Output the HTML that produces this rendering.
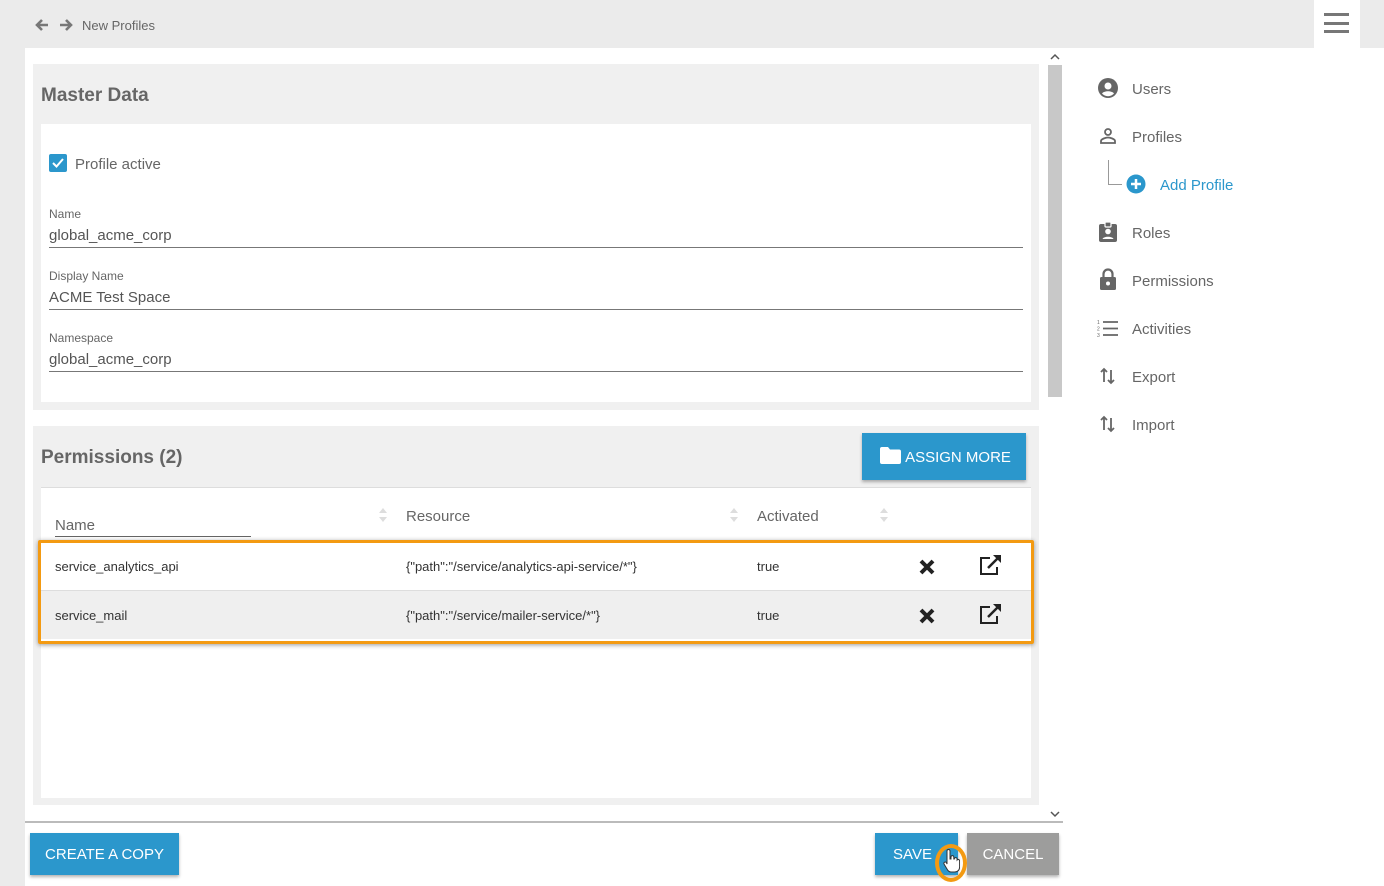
<!DOCTYPE html>
<html><head><meta charset="utf-8"><style>
*{box-sizing:border-box;margin:0;padding:0}
body{width:1384px;height:886px;overflow:hidden;background:#ebebeb;font-family:"Liberation Sans",sans-serif;position:relative;color:#666}
.a{position:absolute}
.lbl{font-size:12px;color:#666}
.val{font-size:15px;color:#555}
.line{height:1px;background:#777}
.nav{position:absolute;left:1097px;font-size:15px;color:#666}
.nav span{position:absolute;left:35px;top:0;white-space:nowrap}
.btn{position:absolute;color:#fff;font-size:15px;text-align:center;box-shadow:0 2px 3px rgba(0,0,0,.3)}
.sort{position:absolute;width:10px;height:16px}
.td{position:absolute;font-size:13px;color:#333}
</style></head><body>
<!-- top bar -->
<svg class="a" style="left:34px;top:17px" width="16" height="16" viewBox="0 0 16 16"><path d="M14 8H3M8 3L3 8l5 5" stroke="#777" stroke-width="2.6" fill="none"/></svg>
<svg class="a" style="left:58px;top:17px" width="16" height="16" viewBox="0 0 16 16"><path d="M2 8h11M8 3l5 5-5 5" stroke="#777" stroke-width="2.6" fill="none"/></svg>
<div class="a" style="left:82px;top:18px;font-size:13px;color:#666">New Profiles</div>
<div class="a" style="left:1314px;top:0;width:46px;height:48px;background:#fff"></div>
<div class="a" style="left:1324px;top:13px;width:25px;height:3px;background:#777"></div>
<div class="a" style="left:1324px;top:22px;width:25px;height:3px;background:#777"></div>
<div class="a" style="left:1324px;top:30px;width:25px;height:3px;background:#777"></div>
<!-- main -->
<div class="a" style="left:25px;top:48px;width:1038px;height:838px;background:#fff"></div>
<div class="a" style="left:1063px;top:48px;width:321px;height:838px;background:#fff"></div>
<!-- scrollbar -->
<div class="a" style="left:1048px;top:65px;width:14px;height:332px;background:#c8c8c8"></div>
<svg class="a" style="left:1050px;top:53px" width="10" height="8"><path d="M1 6l4-4 4 4" stroke="#555" stroke-width="1.5" fill="none"/></svg>
<svg class="a" style="left:1050px;top:810px" width="10" height="8"><path d="M1 2l4 4 4-4" stroke="#555" stroke-width="1.5" fill="none"/></svg>
<!-- master data -->
<div class="a" style="left:33px;top:64px;width:1006px;height:346px;background:#f0f0f0"></div>
<div class="a" style="left:41px;top:85px;font-size:19px;font-weight:bold;color:#666">Master Data</div>
<div class="a" style="left:41px;top:124px;width:990px;height:278px;background:#fff"></div>
<div class="a" style="left:49px;top:154px;width:18px;height:18px;background:#2b97cc;border-radius:2px"></div>
<svg class="a" style="left:49px;top:154px" width="18" height="18"><path d="M4 9l3.5 3.5L14 5" stroke="#fff" stroke-width="2" fill="none"/></svg>
<div class="a" style="left:75px;top:156px;font-size:15px;color:#666">Profile active</div>
<div class="a lbl" style="left:49px;top:207px">Name</div>
<div class="a val" style="left:49px;top:227px">global_acme_corp</div>
<div class="a line" style="left:49px;top:247px;width:974px"></div>
<div class="a lbl" style="left:49px;top:269px">Display Name</div>
<div class="a val" style="left:49px;top:289px">ACME Test Space</div>
<div class="a line" style="left:49px;top:309px;width:974px"></div>
<div class="a lbl" style="left:49px;top:331px">Namespace</div>
<div class="a val" style="left:49px;top:351px">global_acme_corp</div>
<div class="a line" style="left:49px;top:371px;width:974px"></div>
<!-- permissions -->
<div class="a" style="left:33px;top:426px;width:1006px;height:379px;background:#f0f0f0"></div>
<div class="a" style="left:41px;top:447px;font-size:19px;font-weight:bold;color:#666">Permissions (2)</div>
<div class="btn" style="left:862px;top:433px;width:164px;height:47px;background:#2b97cc;line-height:49px;padding-left:28px">ASSIGN MORE</div>
<svg class="a" style="left:879px;top:446px" width="23" height="19"><path d="M1 3a2 2 0 0 1 2-2h6l2 2.5h9a2 2 0 0 1 2 2V16a2 2 0 0 1-2 2H3a2 2 0 0 1-2-2z" fill="#fff"/></svg>
<div class="a" style="left:41px;top:487px;width:990px;height:311px;background:#fff;border-top:1px solid #ddd"></div>
<div class="a" style="left:55px;top:517px;font-size:15px;color:#666">Name</div>
<div class="a" style="left:55px;top:536px;width:196px;height:1px;background:#666"></div>
<div class="a" style="left:406px;top:508px;font-size:15px;color:#666">Resource</div>
<div class="a" style="left:757px;top:508px;font-size:15px;color:#666">Activated</div>
<svg class="sort" style="left:378px;top:507px" viewBox="0 0 10 16"><path d="M1 6l4-5 4 5zM1 10l4 5 4-5z" fill="#ddd"/></svg>
<svg class="sort" style="left:729px;top:507px" viewBox="0 0 10 16"><path d="M1 6l4-5 4 5zM1 10l4 5 4-5z" fill="#ddd"/></svg>
<svg class="sort" style="left:879px;top:507px" viewBox="0 0 10 16"><path d="M1 6l4-5 4 5zM1 10l4 5 4-5z" fill="#ddd"/></svg>
<div class="a" style="left:41px;top:590px;width:990px;height:49px;background:#efefef;border-top:1px solid #ddd"></div>
<div class="a" style="left:38px;top:540px;width:996px;height:104px;border:3px solid #f39a12;border-radius:2px;box-shadow:0 1px 5px rgba(0,0,0,.4)"></div>
<div class="td" style="left:55px;top:559px">service_analytics_api</div>
<div class="td" style="left:406px;top:559px">{"path":"/service/analytics-api-service/*"}</div>
<div class="td" style="left:757px;top:559px">true</div>
<div class="td" style="left:55px;top:608px">service_mail</div>
<div class="td" style="left:406px;top:608px">{"path":"/service/mailer-service/*"}</div>
<div class="td" style="left:757px;top:608px">true</div>
<svg class="a" style="left:918px;top:558px" width="18" height="18"><path d="M3 3l12 12M15 3L3 15" stroke="#222" stroke-width="4"/></svg>
<svg class="a" style="left:918px;top:607px" width="18" height="18"><path d="M3 3l12 12M15 3L3 15" stroke="#222" stroke-width="4"/></svg>
<svg class="a" style="left:978px;top:553px" width="26" height="24"><path d="M12 5H3v16h16v-7" stroke="#222" stroke-width="2" fill="none"/><path d="M10 15L21 4" stroke="#222" stroke-width="2.5"/><path d="M15 2h8v8z" fill="#222"/></svg>
<svg class="a" style="left:978px;top:602px" width="26" height="24"><path d="M12 5H3v16h16v-7" stroke="#222" stroke-width="2" fill="none"/><path d="M10 15L21 4" stroke="#222" stroke-width="2.5"/><path d="M15 2h8v8z" fill="#222"/></svg>
<!-- bottom -->
<div class="a" style="left:25px;top:821px;width:1038px;height:2px;background:#bbb"></div>
<div class="btn" style="left:30px;top:833px;width:149px;height:42px;background:#2b97cc;line-height:44px">CREATE A COPY</div>
<div class="btn" style="left:875px;top:833px;width:83px;height:42px;background:#2b97cc;line-height:44px;padding-right:8px">SAVE</div>
<div class="btn" style="left:967px;top:833px;width:92px;height:42px;background:#9d9d9c;line-height:44px">CANCEL</div>
<div class="a" style="left:935px;top:844px;width:32px;height:38px;border:4px solid #f39a12;border-radius:50%"></div>
<svg class="a" style="left:942px;top:848px" width="18" height="26"><path d="M5 3a1.5 1.5 0 0 1 3 0v8h1v-2a1.4 1.4 0 0 1 2.8 0v2h.5a1.4 1.4 0 0 1 2.8 0v1a1.4 1.4 0 0 1 2.5 1v6c0 3-2 5-5 5H9c-2 0-3-1-4-3l-3-5a1.4 1.4 0 0 1 2.4-1.4L5 16z" fill="#fff" stroke="#333" stroke-width="1"/></svg>
<!-- sidebar -->
<svg class="a" style="left:1098px;top:78px" width="20" height="20" viewBox="0 0 20 20"><circle cx="10" cy="10" r="10" fill="#666"/><circle cx="10" cy="8" r="3.5" fill="#fff"/><path d="M4 15.5c2-3 10-3 12 0A8 8 0 0 1 4 15.5z" fill="#fff"/></svg>
<div class="nav" style="top:81px"><span>Users</span></div>
<svg class="a" style="left:1099px;top:127px" width="18" height="18" viewBox="0 0 18 18"><circle cx="9" cy="5" r="3" stroke="#666" stroke-width="1.8" fill="none"/><path d="M2 16v-2c0-2 5-3.5 7-3.5s7 1.5 7 3.5v2z" stroke="#666" stroke-width="1.8" fill="none"/></svg>
<div class="nav" style="top:129px"><span>Profiles</span></div>
<div class="a" style="left:1108px;top:160px;width:1px;height:25px;background:#999"></div>
<div class="a" style="left:1108px;top:184px;width:14px;height:1px;background:#999"></div>
<svg class="a" style="left:1126px;top:174px" width="20" height="20"><circle cx="10" cy="10" r="9.5" fill="#2b97cc"/><path d="M10 5v10M5 10h10" stroke="#fff" stroke-width="2.5"/></svg>
<div class="a" style="left:1160px;top:177px;font-size:15px;color:#2b97cc">Add Profile</div>
<svg class="a" style="left:1099px;top:222px" width="18" height="20" viewBox="0 0 18 20"><rect x="0" y="2" width="18" height="18" rx="2" fill="#666"/><rect x="6" y="0" width="6" height="5" rx="1" fill="#666" stroke="#fff" stroke-width="1.2"/><circle cx="9" cy="9.5" r="2.8" fill="#fff"/><path d="M3.5 17c1-3 10-3 11 0z" fill="#fff"/></svg>
<div class="nav" style="top:225px"><span>Roles</span></div>
<svg class="a" style="left:1100px;top:268px" width="16" height="22" viewBox="0 0 16 22"><path d="M3.5 9V6a4.5 4.5 0 0 1 9 0v3" stroke="#666" stroke-width="2.2" fill="none"/><rect x="0" y="9" width="16" height="13" rx="1.5" fill="#666"/><circle cx="8" cy="15.5" r="2" fill="#fff"/></svg>
<div class="nav" style="top:273px"><span>Permissions</span></div>
<svg class="a" style="left:1097px;top:320px" width="22" height="17" viewBox="0 0 22 17"><path d="M6 2h15M6 8.5h15M6 15h15" stroke="#666" stroke-width="1.8"/><text x="0" y="4" font-size="5" fill="#666" font-family="Liberation Sans">1</text><text x="0" y="10.5" font-size="5" fill="#666" font-family="Liberation Sans">2</text><text x="0" y="17" font-size="5" fill="#666" font-family="Liberation Sans">3</text></svg>
<div class="nav" style="top:321px"><span>Activities</span></div>
<svg class="a" style="left:1100px;top:367px" width="16" height="18" viewBox="0 0 16 18"><path d="M4 15V2M1 5l3-3 3 3M11 3v13M8 13l3 3 3-3" stroke="#666" stroke-width="1.8" fill="none"/></svg>
<div class="nav" style="top:369px"><span>Export</span></div>
<svg class="a" style="left:1100px;top:415px" width="16" height="18" viewBox="0 0 16 18"><path d="M4 15V2M1 5l3-3 3 3M11 3v13M8 13l3 3 3-3" stroke="#666" stroke-width="1.8" fill="none"/></svg>
<div class="nav" style="top:417px"><span>Import</span></div>
</body></html>
